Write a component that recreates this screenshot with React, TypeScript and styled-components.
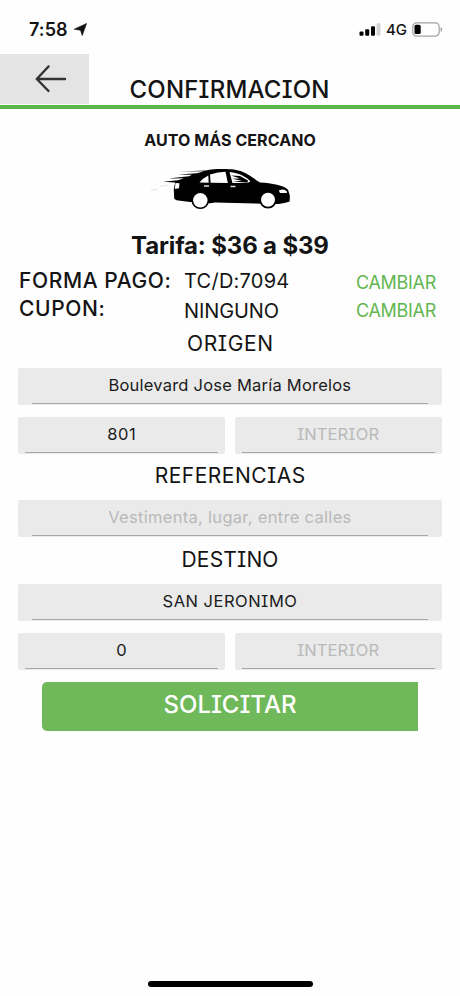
import React from "react";
import styled, { createGlobalStyle } from "styled-components";

const GlobalStyle = createGlobalStyle`
  * { box-sizing: border-box; }
  html, body { margin: 0; padding: 0; background: #fefefe; }
  body { font-family: Inter, "Liberation Sans", sans-serif; color: #141414; }
`;

const Screen = styled.div`
  width: 460px;
  height: 996px;
  display: flex;
  flex-direction: column;
  overflow: hidden;
  background: #fefefe;
`;

const Label = styled.span<{ $size: number; $track?: number; $weight?: number; $serifI?: boolean }>`
  display: block;
  white-space: nowrap;
  font-size: ${(p) => p.$size}px;
  letter-spacing: ${(p) => p.$track ?? 0}px;
  margin-right: ${(p) => -(p.$track ?? 0)}px;
  font-weight: ${(p) => p.$weight ?? 400};
  font-feature-settings: ${(p) => (p.$serifI ? '"cv08" 1' : "normal")};
`;

const StatusBar = styled.header`
  height: 54px;
  padding: 4px 17px 0 29px;
  display: flex;
  align-items: center;
  justify-content: space-between;
`;

const StatusGroup = styled.div<{ $gap: number }>`
  display: flex;
  align-items: center;
  gap: ${(p) => p.$gap}px;
`;

const Header = styled.div`
  height: 55px;
  display: grid;
  grid-template-columns: 89px 281px 90px;
  border-bottom: 4px solid #5cb548;
`;

const BackButton = styled.button`
  height: 50px;
  padding: 0 0 0 12px;
  border: 0;
  background: #e4e4e4;
  display: flex;
  align-items: center;
  justify-content: center;
`;

const HeaderTitle = styled.h1`
  margin: 0;
  padding-top: 21px;
  line-height: 30px;
  display: flex;
  justify-content: center;
`;

const Line = styled.div<{ $height: number; $shift?: number; $lift?: number }>`
  height: ${(p) => p.$height}px;
  padding-top: ${(p) => p.$shift ?? 0}px;
  padding-bottom: ${(p) => p.$lift ?? 0}px;
  display: flex;
  align-items: center;
  justify-content: center;
`;

const CarArea = styled.div`
  height: 76px;
  padding: 7px 0 0 150px;
`;

const Details = styled.div`
  height: 66px;
  display: grid;
  grid-template-columns: 165px 172px 90px;
  padding: 5px 14px 0 19px;
`;

const Column = styled.div<{ $row: number; $top: number }>`
  padding-top: ${(p) => p.$top}px;
  display: grid;
  grid-auto-rows: ${(p) => p.$row}px;
  align-content: start;
  line-height: ${(p) => p.$row}px;
`;

const ChangeLink = styled.a`
  color: #62b650;
`;

const FieldRow = styled.div<{ $split?: boolean }>`
  height: 37px;
  margin: 0 18.5px 0 18px;
  display: grid;
  grid-template-columns: ${(p) => (p.$split ? "1fr 1fr" : "1fr")};
  gap: 9.5px;
`;

const Field = styled.div<{ $inset: number; $empty?: boolean }>`
  padding: 0 ${(p) => p.$inset}px;
  border-radius: 2px;
  background: #eaeaea;
  color: ${(p) => (p.$empty ? "#b9b9b9" : "#1b1b1b")};
`;

const FieldLine = styled.div`
  height: 36px;
  padding-bottom: 1px;
  border-bottom: 1px solid #a6a6a6;
  display: flex;
  align-items: center;
  justify-content: center;
`;

const Gap = styled.div`
  height: 12px;
`;

const Submit = styled.button`
  width: 376px;
  height: 49px;
  margin: 12px 0 0 42px;
  padding: 0 0 4px;
  border: 0;
  border-radius: 5px 0 0 5px;
  background: #6fb95b;
  color: #fff;
  font-family: inherit;
  display: flex;
  align-items: center;
  justify-content: center;
`;

const HomeBar = styled.div`
  width: 165px;
  height: 6px;
  margin: auto 0 9px 147.5px;
  border-radius: 3px;
  background: #000;
`;

const LocationIcon = () => (
  <svg width="13" height="13" viewBox="0 0 13 13">
    <path d="M12.6.4 8.2 12.6 6.5 7.2.2 6.2Z" fill="#111" stroke="#111" strokeWidth="0.6" strokeLinejoin="round" />
  </svg>
);

const SignalIcon = () => (
  <svg width="22" height="13" viewBox="0 0 22 13">
    <rect x="0.5" y="8.5" width="4" height="4.2" rx="1" />
    <rect x="6.2" y="6.3" width="4" height="6.4" rx="1" />
    <rect x="12" y="3.2" width="4" height="9.5" rx="1" />
    <rect x="17.6" y="0.3" width="3.8" height="12.4" rx="1" fill="#d2d2d2" />
  </svg>
);

const BatteryIcon = () => (
  <svg width="31" height="15" viewBox="0 0 31 15">
    <rect x="0.8" y="0.8" width="26.4" height="13.4" rx="4" fill="#fff" stroke="#a2a2a2" strokeWidth="1.2" />
    <rect x="2.5" y="2.7" width="6.2" height="9.4" rx="1.6" />
    <path d="M28.7 5.1c2 .9 2 3.9 0 4.8Z" fill="#999" />
  </svg>
);

const ArrowIcon = () => (
  <svg width="32" height="28" viewBox="0 0 32 28" fill="none" stroke="#333" strokeWidth="2.4" strokeLinecap="round" strokeLinejoin="round">
    <path d="M30 14H1.8M13.5 1.5 1.8 14l11.7 12" />
  </svg>
);

const CarIcon = () => (
  <svg width="142" height="46" viewBox="150 164 142 46">
    <path
      fill="#000"
      d="M174 193.500 173.800 189 175.200 182.500 163 181.800 178 180.300 184 178.200 168 178.500 189 176.300 192 174.800 178 174.400 197 173.200 204 171.300 180 171.600 206 170.400C213 168.800 227 168.700 235 169.700 246 171.300 253 178.200 260 182.500 272 183.300 284 185.200 288 189.800L289.900 195.500 289.600 201.500C284 203.600 279 204 275 204L215 202.600 210 203.200 190 202 176.500 200.300 174.200 198.800Z"
    />
    <path fill="#fefefe" d="M208.300 175.500Q203 178 199.500 182.600L208.700 182.700ZM210 174.600Q218 171.800 225.500 171.700L227.800 182.900 210.600 182.700ZM229.500 171.900Q242 172.800 250.500 181.300L247.500 183.100 232.500 183Z" />
    <path d="M231 175.500 240 176 248 180.500 247.500 182.800 233 181.500 242 180.800 232 178.800 240 178.500Z" />
    <path d="M204 186h5M230.500 186.500h5" stroke="#ddd" strokeWidth="1.3" />
    <path d="m175.500 183 4 .2-.5 5-4.200.8Z" fill="#fefefe" />
    <path d="M278.800 190.500q5-2.500 8 .8l.2 1.700-7 .1Z" fill="#fefefe" />
    <circle cx="200.300" cy="200.300" r="8.800" />
    <circle cx="268" cy="199.700" r="8.800" />
    <circle cx="200.300" cy="200.300" r="7.200" fill="#fefefe" />
    <circle cx="268" cy="199.700" r="7" fill="#fefefe" />
    <path d="m151 190.300 6-1M160 186.500l8-1.500" stroke="#e3e3e3" strokeWidth="1" />
  </svg>
);

export default function App() {
  return (
    <>
      <GlobalStyle />
      <Screen>
        <StatusBar>
          <StatusGroup $gap={6}>
            <Label $size={18} $weight={600} $track={0.1}>7:58</Label>
            <LocationIcon />
          </StatusGroup>
          <StatusGroup $gap={5}>
            <SignalIcon />
            <Label $size={15} $weight={500}>4G</Label>
            <BatteryIcon />
          </StatusGroup>
        </StatusBar>
        <Header>
          <BackButton aria-label="Regresar"><ArrowIcon /></BackButton>
          <HeaderTitle><Label $size={24} $weight={500} $track={0.2} $serifI>CONFIRMACION</Label></HeaderTitle>
        </Header>

        <Line $height={48} $shift={14}><Label $size={16} $weight={700} $track={0.08}>AUTO MÁS CERCANO</Label></Line>
        <CarArea><CarIcon /></CarArea>
        <Line $height={28} $lift={4}><Label $size={24} $weight={700} $track={-0.15}>Tarifa: $36 a $39</Label></Line>
        <Details>
          <Column $row={28} $top={1}>
            <Label $size={21} $weight={500} $track={0.6}>FORMA PAGO:</Label>
            <Label $size={21} $weight={500} $track={0.6}>CUPON:</Label>
          </Column>
          <Column $row={30} $top={0}>
            <Label $size={20} $track={0.25}>TC/D:7094</Label>
            <Label $size={20} $track={-0.1}>NINGUNO</Label>
          </Column>
          <Column as={ChangeLink} $row={28} $top={3}>
            <Label $size={18} $track={-0.3}>CAMBIAR</Label>
            <Label $size={18} $track={-0.3}>CAMBIAR</Label>
          </Column>
        </Details>

        <Line $height={41} $lift={9}><Label $size={21} $track={0.6} $serifI>ORIGEN</Label></Line>
        <FieldRow>
          <Field $inset={14}><FieldLine><Label $size={16.500} $track={0.22}>Boulevard Jose María Morelos</Label></FieldLine></Field>
        </FieldRow>
        <Gap />
        <FieldRow $split>
          <Field $inset={7}><FieldLine><Label $size={16.500} $track={0.5}>801</Label></FieldLine></Field>
          <Field $inset={7} $empty><FieldLine><Label $size={16.500} $track={0.1} $serifI>INTERIOR</Label></FieldLine></Field>
        </FieldRow>
        <Line $height={46} $lift={3}><Label $size={21} $track={0.5} $serifI>REFERENCIAS</Label></Line>
        <FieldRow>
          <Field $inset={14} $empty><FieldLine><Label $size={16.500} $track={0.3}>Vestimenta, lugar, entre calles</Label></FieldLine></Field>
        </FieldRow>
        <Line $height={47} $lift={3}><Label $size={21} $track={0.15} $serifI>DESTINO</Label></Line>
        <FieldRow>
          <Field $inset={14}><FieldLine><Label $size={16.500} $track={0.5} $serifI>SAN JERONIMO</Label></FieldLine></Field>
        </FieldRow>
        <Gap />
        <FieldRow $split>
          <Field $inset={7}><FieldLine><Label $size={16.500}>0</Label></FieldLine></Field>
          <Field $inset={7} $empty><FieldLine><Label $size={16.500} $track={0.1} $serifI>INTERIOR</Label></FieldLine></Field>
        </FieldRow>
        <Submit><Label $size={24} $weight={500} $serifI>SOLICITAR</Label></Submit>
        <HomeBar />
      </Screen>
    </>
  );
}
